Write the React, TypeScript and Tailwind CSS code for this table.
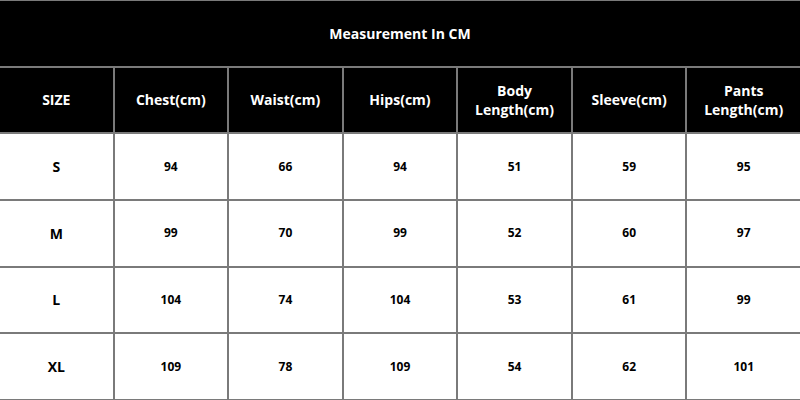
import React from 'react';

const headers = ['SIZE', 'Chest(cm)', 'Waist(cm)', 'Hips(cm)', 'Body\nLength(cm)', 'Sleeve(cm)', 'Pants\nLength(cm)'];

const rows = [
  ['S', '94', '66', '94', '51', '59', '95'],
  ['M', '99', '70', '99', '52', '60', '97'],
  ['L', '104', '74', '104', '53', '61', '99'],
  ['XL', '109', '78', '109', '54', '62', '101'],
];

const App: React.FC = () => {
  return (
    <div
      className="h-[400px] w-[800px] overflow-hidden bg-[#7a7a7a] pb-px pt-px"
      style={{ fontFamily: '"Open Sans", "Noto Sans", sans-serif' }}
    >
      <div className="grid h-full grid-cols-7 grid-rows-6 gap-[2px]">
        <div className="col-span-7 flex items-center justify-center bg-black text-[14px] font-bold text-white">
          Measurement In CM
        </div>

        {headers.map((h) => (
          <div
            key={h}
            className="flex items-center justify-center whitespace-pre-line bg-black text-center text-[14px] font-bold leading-[19px] text-white"
          >
            {h}
          </div>
        ))}

        {rows.map((r) =>
          r.map((cell, i) => (
            <div
              key={r[0] + i}
              className={`flex items-center justify-center bg-white font-bold text-black ${
                i === 0 ? 'text-[14px]' : 'text-[12px]'
              }`}
            >
              {cell}
            </div>
          ))
        )}
      </div>
    </div>
  );
};

export default App;
